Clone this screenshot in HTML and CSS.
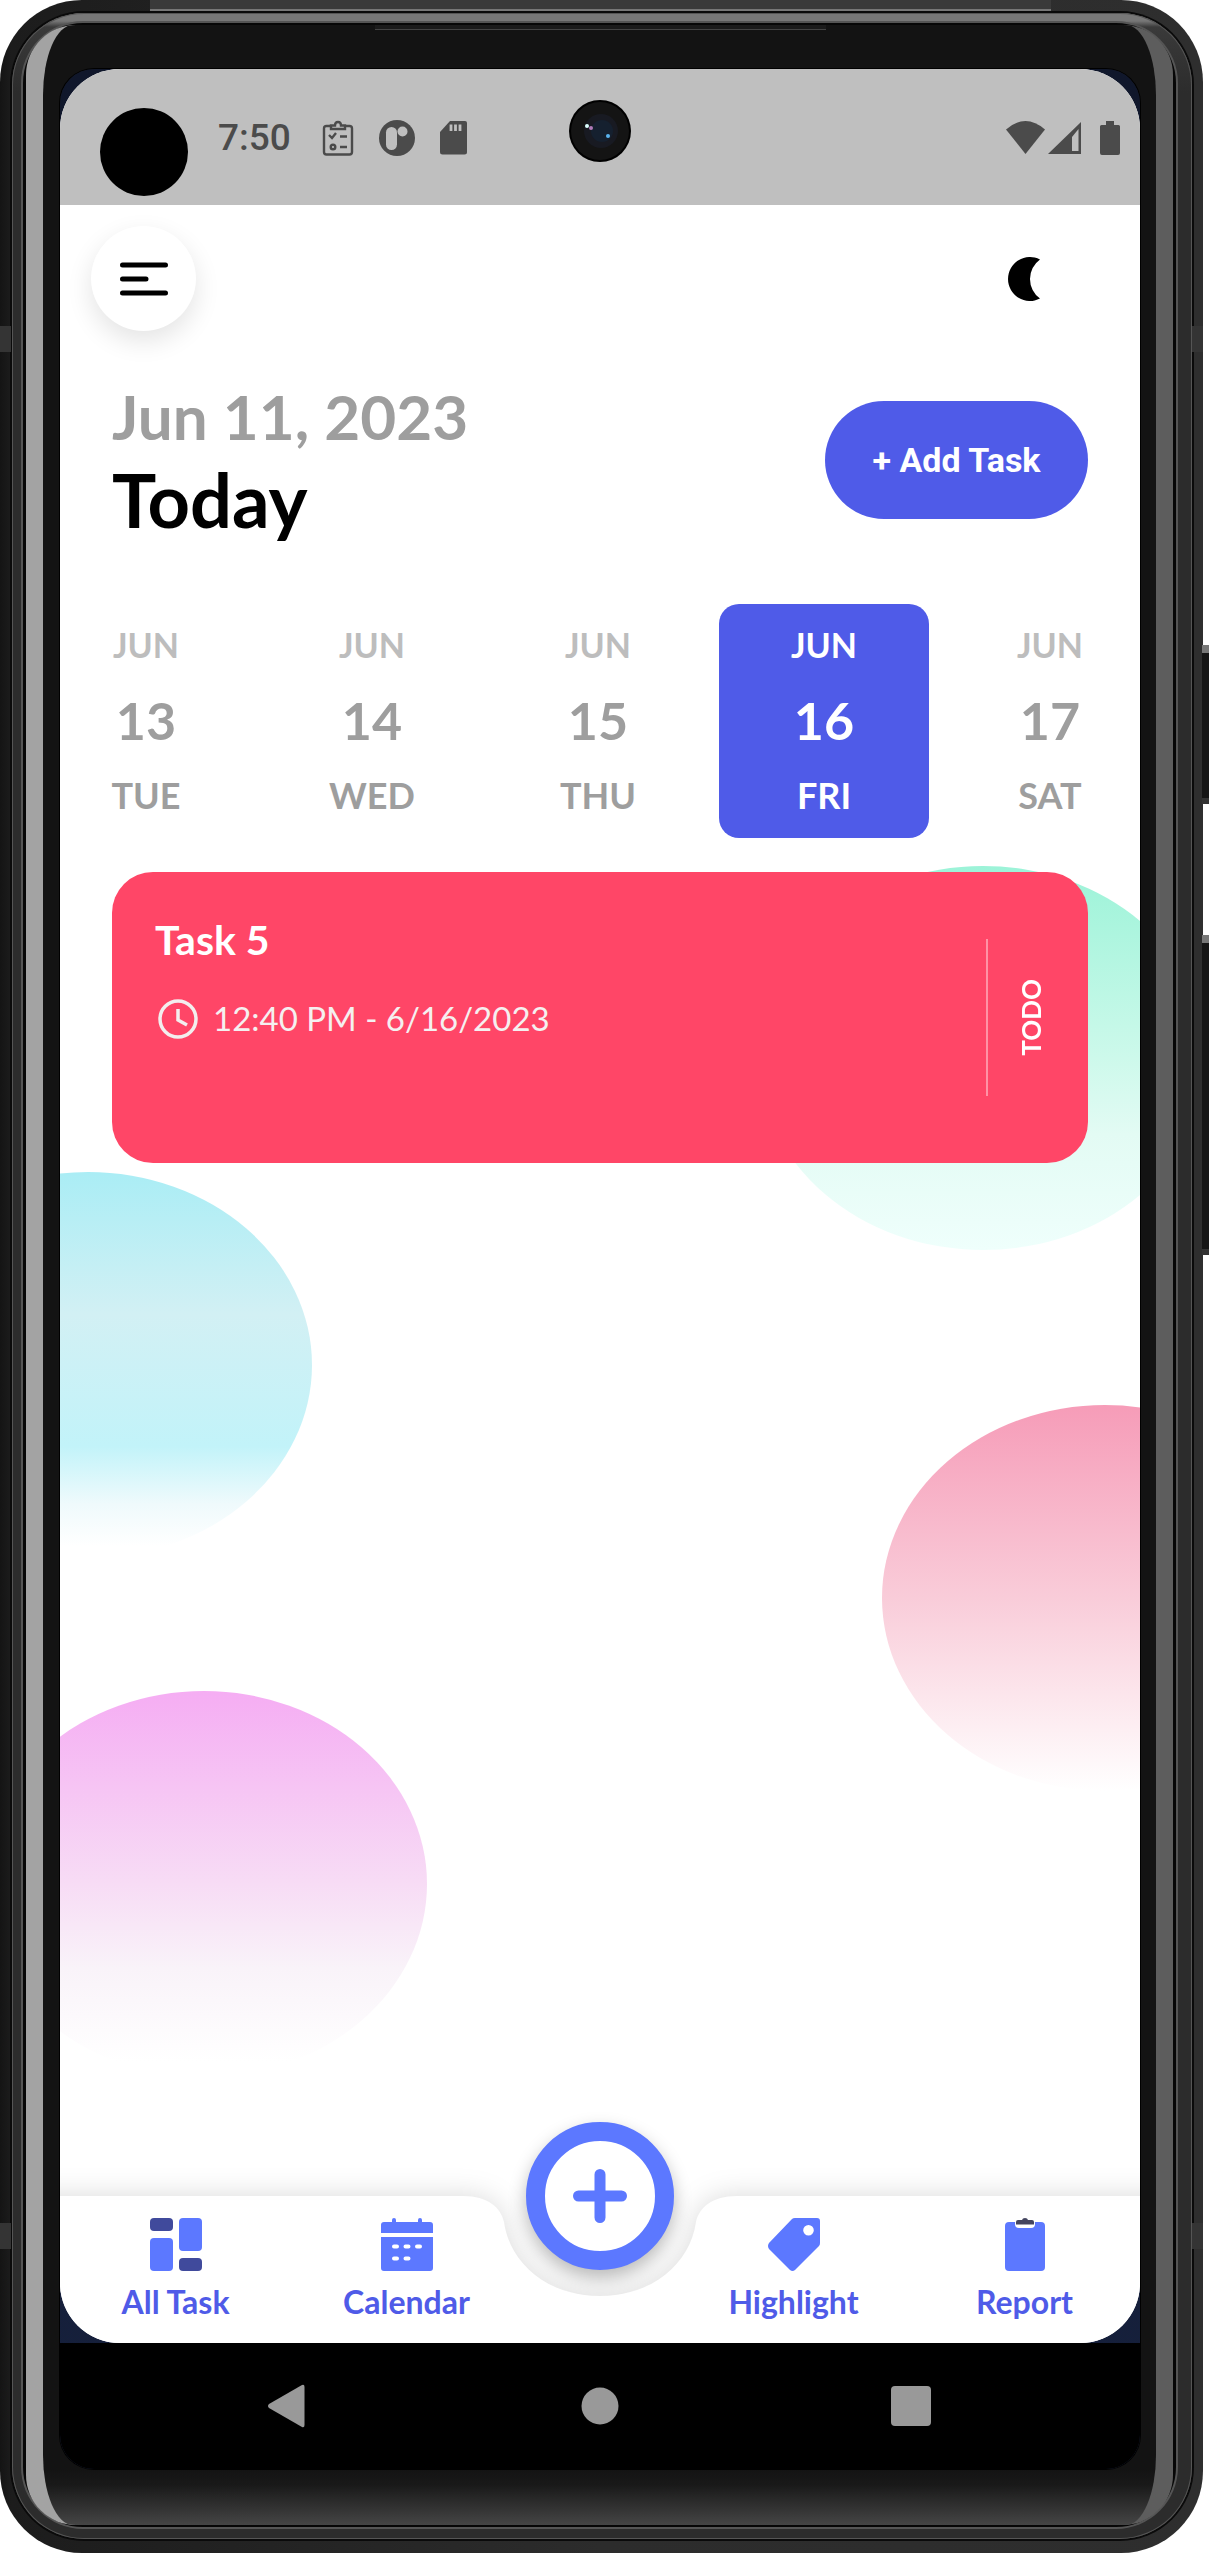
FILE: index.html
```html
<!DOCTYPE html>
<html lang="en">
<head>
<meta charset="utf-8">
<meta name="viewport" content="width=device-width, initial-scale=1">
<title>Today's tasks</title>
<link rel="stylesheet" href="styles.css">
</head>
<body>
<div class="phone">
  <span class="side-key power"></span>
  <span class="side-key volume"></span>
  <span class="band band-tl"></span><span class="band band-tr"></span>
  <span class="band band-bl"></span><span class="band band-br"></span>
  <span class="crown"></span>
  <div class="rail">
    <div class="lip">
      <div class="glass">
        <div class="bezel">
          <span class="earpiece"></span>
          <div class="screen">
            <div class="app">
              <header class="status">
                <span class="dot"></span>
                <span class="time">7:50</span>
                <svg class="note" width="32" height="36" viewBox="0 0 32 36" fill="none" stroke="#4b4b4b" stroke-width="2.4">
                  <path d="M9 6H4.500Q2 6 2 8.500V32Q2 34.500 4.500 34.500H27.500Q30 34.500 30 32V8.500Q30 6 27.500 6H23M9 9V5.500H13Q13 2 16 2T19 5.500H23V9Z"/>
                  <path d="M7 15L10 18L14 13M18 16.500H25M18 27H25"/><circle cx="11" cy="27" r="2.300"/>
                </svg>
                <svg class="note" width="36" height="38" viewBox="0 0 36 38">
                  <circle cx="18" cy="19" r="18" fill="#4b4b4b"/><rect x="7" y="8" width="11" height="23" rx="5.500" fill="#bfbfbf"/><circle cx="23.500" cy="12.500" r="5" fill="#bfbfbf"/>
                </svg>
                <svg class="note" width="28" height="34" viewBox="0 0 28 34">
                  <path d="M10 0H25Q27 0 27 2V31Q27 33.500 24.500 33.500H2.500Q0 33.500 0 31V11Z" fill="#4b4b4b"/><path d="M11 3.500V10M15.500 3.500V10M20 3.500V10" stroke="#bfbfbf" stroke-width="2.800"/>
                </svg>
                <svg class="signals" width="116" height="34" viewBox="0 0 116 34" fill="#4b4b4b">
                  <path d="M0 8.500Q19.500 -8.500 39 8.500L19.500 33Z"/>
                  <path fill-rule="evenodd" d="M75 1V33H42ZM72.500 8L66 16V30H72.500Z"/>
                  <path d="M100 0H108V4H112.500Q114 4 114 5.500V32Q114 34 112 34H96Q94 34 94 32V5.500Q94 4 95.500 4H100Z"/>
                </svg>
              </header>
              <div class="camera">
                <svg width="62" height="62" viewBox="0 0 62 62">
                  <circle cx="31" cy="31" r="31" fill="#000"/><circle cx="31" cy="31" r="29" fill="#141414"/><circle cx="32" cy="31" r="17" fill="#181a22"/><circle cx="33" cy="31" r="11" fill="#15202f"/>
                  <circle cx="18" cy="26" r="2" fill="#dff"/><circle cx="22" cy="28" r="2" fill="#b07ab8"/><circle cx="39" cy="36" r="2" fill="#5ab4f0"/>
                </svg>
              </div>

              <main class="content">
                <svg class="blobs" height="1900" aria-hidden="true">
                  <defs>
                    <linearGradient id="green" x1="0" y1="0" x2="0" y2="1"><stop offset="0" stop-color="#9cf3d8"/><stop offset=".5" stop-color="#cdf9eb"/><stop offset=".7" stop-color="#e3fbf4"/><stop offset="1" stop-color="#effffc"/></linearGradient>
                    <linearGradient id="cyan" x1="0" y1="0" x2="0" y2="1"><stop offset="0" stop-color="#aaedf5"/><stop offset=".37" stop-color="#d2f0f4"/><stop offset=".71" stop-color="#c2f3f9"/><stop offset=".86" stop-color="#effafc"/><stop offset=".97" stop-color="#fff"/></linearGradient>
                    <linearGradient id="rose" x1="0" y1="0" x2="0" y2="1"><stop offset="0" stop-color="#f69cb8"/><stop offset=".5" stop-color="#f9ccd9"/><stop offset="1" stop-color="#fff"/></linearGradient>
                    <linearGradient id="violet" x1="0" y1="0" x2="0" y2="1"><stop offset="0" stop-color="#f5adf3"/><stop offset=".5" stop-color="#f7dcf5"/><stop offset=".72" stop-color="#f9f3f9"/><stop offset=".96" stop-color="#fff"/></linearGradient>
                  </defs>
                  <ellipse cx="28" cy="1160" rx="224" ry="193" fill="url(#cyan)"/>
                  <ellipse cx="144" cy="1679" rx="223" ry="193" fill="url(#violet)"/>
                  <svg x="100%" overflow="visible"><ellipse cx="-157" cy="853" rx="224" ry="192" fill="url(#green)"/><ellipse cx="-35" cy="1393" rx="223" ry="193" fill="url(#rose)"/></svg>
                </svg>

                <div class="appbar">
                  <button class="round menu" type="button" aria-label="Menu">
                    <svg width="48" height="34" viewBox="0 0 48 34" stroke="#000" stroke-width="5" stroke-linecap="round"><path d="M2.500 3H45.500M2.500 17H26M2.500 31H45.500"/></svg>
                  </button>
                  <button class="round theme" type="button" aria-label="Dark mode">
                    <svg width="32" height="44" viewBox="0 0 32 44"><path d="M32 2.400A22 22 0 1 0 32 41.600A24.200 24.200 0 0 1 32 2.400Z"/></svg>
                  </button>
                </div>

                <div class="heading">
                  <div>
                    <p class="date">Jun 11, 2023</p>
                    <h1 class="today">Today</h1>
                  </div>
                  <button class="add" type="button">+ Add Task</button>
                </div>

                <div class="days">
                  <button class="day" type="button"><span class="month">JUN</span><span class="num">13</span><span>TUE</span></button>
                  <button class="day" type="button"><span class="month">JUN</span><span class="num">14</span><span>WED</span></button>
                  <button class="day" type="button"><span class="month">JUN</span><span class="num">15</span><span>THU</span></button>
                  <button class="day selected" type="button" aria-pressed="true"><span class="month">JUN</span><span class="num">16</span><span>FRI</span></button>
                  <button class="day" type="button"><span class="month">JUN</span><span class="num">17</span><span>SAT</span></button>
                </div>

                <article class="task">
                  <div class="task-body">
                    <h2 class="task-title">Task 5</h2>
                    <p class="task-time">
                      <svg width="46" height="44" viewBox="0 0 46 44" fill="none" stroke="#f3eeee" stroke-width="3.500"><circle cx="23" cy="23" r="18"/><path d="M23 13V24L32 29"/></svg>
                      12:40 PM - 6/16/2023
                    </p>
                  </div>
                  <span class="rule"></span>
                  <span class="state">TODO</span>
                </article>
              </main>

              <nav class="tabs">
                <svg class="tabs-shape" width="100%" height="147" aria-hidden="true"><svg x="50%" overflow="visible"><path fill="#fff" d="M-2000 0H-137C-112 0 -99 12 -96 26C-90 68 -52 100 0 100C52 100 90 68 96 26C99 12 112 0 137 0H2000V147H-2000Z"/></svg></svg>
                <a class="tab" href="#all">
                  <svg width="54" height="54" viewBox="0 0 54 54"><g fill="#404a9c"><rect x="1" width="23" height="13" rx="4"/><rect x="30" y="40" width="23" height="13" rx="4"/></g><g fill="#5c78ff"><rect x="1" y="20" width="23" height="33" rx="4"/><rect x="30" width="23" height="33" rx="4"/></g></svg>
                  All Task
                </a>
                <a class="tab" href="#calendar">
                  <svg width="54" height="54" viewBox="0 0 54 54" fill="#5c78ff"><path d="M1 15V7Q1 4 4 4H12V2Q12 0 14 0T16 2V4H38V2Q38 0 40 0T42 2V4H50Q53 4 53 7V15ZM1 19H53V50Q53 53 50 53H4Q1 53 1 50Z"/><path d="M14 28.500H17M25.500 28.500H28.500M37 28.500H40M14 40.500H17M25.500 40.500H28.500" stroke="#fff" stroke-width="4" stroke-linecap="round"/></svg>
                  Calendar
                </a>
                <span></span>
                <a class="tab" href="#highlight">
                  <svg width="54" height="54" viewBox="0 0 54 54" fill="#5c78ff"><path fill-rule="evenodd" d="M25 1Q26 0 28 0H50Q53 0 53 3V25Q53 27 52 28L28 52Q25.500 54 23 52L2 31Q0 28 2 25ZM41.500 7A5.300 5.300 0 1 0 41.500 17.600A5.300 5.300 0 1 0 41.500 7Z"/></svg>
                  Highlight
                </a>
                <a class="tab" href="#report">
                  <svg width="54" height="54" viewBox="0 0 54 54"><rect x="7" y="4" width="40" height="49" rx="4" fill="#5c78ff"/><rect x="17" y="1" width="20" height="9" rx="4" fill="#fff"/><path d="M20 2H24Q24.500 0 27 0T30 2H34Q36 2 36 4V6.500H18V4Q18 2 20 2Z" fill="#44455f"/></svg>
                  Report
                </a>
                <button class="fab" type="button" aria-label="New task">
                  <svg width="56" height="56" viewBox="0 0 56 56" stroke="#5c78ff" stroke-width="11" stroke-linecap="round"><path d="M28 6.500V49.500M6.500 28H49.500"/></svg>
                </button>
              </nav>
            </div>
            <div class="system">
              <button type="button" aria-label="Back"><svg width="44" height="44" viewBox="0 0 44 44" fill="#999"><path d="M35 1Q37.500 0 37.500 3V41Q37.500 44 35 43L2 24Q0 22 2 20Z"/></svg></button>
              <button type="button" aria-label="Home"><svg width="44" height="44" viewBox="0 0 44 44" fill="#999"><circle cx="22" cy="22" r="18.500"/></svg></button>
              <button type="button" aria-label="Recent apps"><svg width="44" height="44" viewBox="0 0 44 44" fill="#999"><rect x="2" y="2" width="40" height="40" rx="4"/></svg></button>
            </div>
          </div>
        </div>
      </div>
    </div>
  </div>
</div>
</body>
</html>
```
FILE: styles.css
```css
* { box-sizing: border-box; margin: 0; padding: 0; }
body { background: #fff; font-family: Lato, "Liberation Sans", sans-serif; }
button { border: 0; background: none; font: inherit; cursor: pointer; }
svg { display: block; flex: none; }

/* Device frame, from the outer shell inwards */
.phone {
  position: relative;
  display: flex;
  min-height: 100vh;
  margin-right: 6px;
  padding: 13px 11px 14px 12px;
  border-radius: 82px;
  background: linear-gradient(90deg, #141414, #1c1c1c 11px, #2c2c2c 50%, #2e2e2e);
}
.rail, .lip, .glass, .bezel { display: flex; flex: 1; min-width: 0; }
.rail {
  padding: 10px 16px 12px 11px;
  border-radius: 72px;
  background: linear-gradient(#777 0 8px, #3a3a3a 14px, #2c2c2c 80px);
  box-shadow: inset 0 0 0 1px #555, 0 0 0 2px #0a0a0a;
}
.lip {
  padding: 2px 3px;
  border-radius: 60px;
  background: #070707;
  box-shadow: 0 0 0 2px #555;
}
.glass {
  overflow: hidden;
  padding: 0 17px;
  border-radius: 50px;
  background: linear-gradient(90deg, #a3a3a3 50%, #5d5d5d 50%);
}
.bezel {
  position: relative;
  padding: 44px 16px 56px 17px;
  border-radius: 30px / 70px;
  background: linear-gradient(transparent calc(100% - 56px), #191919 calc(100% - 40px), #454545), #131313;
}
.earpiece { position: absolute; top: 0; left: 332px; right: 330px; height: 5px; background: #1b1b1b; border-bottom: 1px solid #444; }
.crown { position: absolute; top: 0; left: 150px; right: 152px; height: 11px; background: #3a3a3a; border-bottom: 2px solid #777; }
.band { position: absolute; width: 11px; height: 26px; background: #343434; }
.band-tl { left: 0; top: 326px; }
.band-tr { right: 0; top: 326px; }
.band-bl { left: 0; bottom: 304px; }
.band-br { right: 0; bottom: 304px; }
.side-key { position: absolute; right: -6px; width: 7px; border-top: 8px solid #777; border-bottom: 6px solid #333; background: #151515; }
.power { top: 645px; height: 159px; }
.volume { top: 935px; height: 320px; }

/* Screen */
.screen {
  display: flex;
  flex: 1;
  flex-direction: column;
  min-width: 0;
  overflow: hidden;
  border-radius: 34px;
  background: linear-gradient(#10172b, #16203c);
  box-shadow: 0 0 0 1px #000;
}
.app {
  position: relative;
  display: flex;
  flex: 1;
  flex-direction: column;
  overflow: hidden;
  border-radius: 60px;
  background: #fff;
}
.status {
  display: flex;
  align-items: center;
  padding: 39px 18px 9px 40px;
  background: #bfbfbf;
}
.dot { width: 88px; height: 88px; border-radius: 50%; background: #000; }
.time { margin: 0 31px 28px 30px; font: 500 37px/44px Roboto, sans-serif; color: #4b4b4b; }
.note { margin: 0 25px 28px 0; }
.signals { margin: 0 0 28px auto; }
.camera { position: absolute; top: 31px; left: 50%; margin-left: -31px; }

.content { position: relative; flex: 1; }
.blobs { position: absolute; top: 0; left: 0; width: 100%; overflow: visible; }
.appbar, .heading, .days, .task { position: relative; }
.appbar { display: flex; justify-content: space-between; padding: 21px 64px 45px 31px; }
.round { display: grid; place-items: center; width: 105px; height: 105px; border-radius: 50%; }
.menu { background: #fff; box-shadow: 0 10px 26px rgba(0, 0, 0, .11); }

.heading { display: flex; align-items: center; justify-content: space-between; padding: 0 52px; }
.date { font-size: 62px; font-weight: 700; line-height: 80px; color: #9e9e9e; }
.today { font-size: 74px; font-weight: 700; line-height: 88px; color: #000; }
.add { width: 263px; height: 118px; border-radius: 59px; background: #4f5be8; color: #fff; font: 700 34px/40px Roboto, sans-serif; }

.days { display: flex; justify-content: center; gap: 16px; margin-top: 60px; overflow: hidden; padding-right: 4px; }
.day {
  display: flex;
  flex: none;
  flex-direction: column;
  align-items: center;
  gap: 21px;
  width: 210px;
  padding: 19px 0 21px;
  border-radius: 20px;
  font-size: 36px;
  font-weight: 700;
  line-height: 44px;
  color: #9e9e9e;
}
.month { font-size: 34px; color: #bdbdbd; }
.num { font-size: 52px; line-height: 64px; }
.selected, .selected .month { color: #fff; }
.selected { background: #4f5be8; }

.task {
  display: flex;
  align-items: center;
  min-height: 291px;
  margin: 34px 52px 0;
  padding: 44px 39px 44px 43px;
  border-radius: 41px;
  background: #ff4667;
  color: #fff;
}
.task-body { flex: 1; align-self: flex-start; }
.task-title { font-size: 41px; font-weight: 700; line-height: 48px; }
.task-time { display: flex; gap: 12px; margin-top: 32px; font-size: 33px; line-height: 44px; color: #f5f0f0; }
.rule { width: 2px; height: 157px; background: #ff92a5; }
.state { margin-left: 25px; writing-mode: vertical-rl; transform: rotate(180deg); font-size: 26px; font-weight: 700; line-height: 36px; }

/* Bottom bar */
.tabs { position: relative; display: grid; grid-template-columns: 1fr 1fr 156px 1fr 1fr; height: 147px; }
.tabs-shape { position: absolute; inset: 0; overflow: visible; filter: drop-shadow(0 0 14px rgba(0, 0, 0, .15)); }
.tab {
  position: relative;
  display: flex;
  flex-direction: column;
  align-items: center;
  gap: 10px;
  padding-top: 22px;
  font-size: 32px;
  font-weight: 700;
  line-height: 40px;
  color: #4f5be8;
  text-decoration: none;
}
.fab {
  position: absolute;
  top: -74px;
  left: 50%;
  display: grid;
  place-items: center;
  width: 148px;
  height: 148px;
  margin-left: -74px;
  border: 19px solid #5c78ff;
  border-radius: 50%;
  background: #fff;
  box-shadow: 0 8px 18px rgba(0, 0, 0, .28);
}

.system { display: flex; align-items: center; justify-content: center; gap: 267px; height: 126px; background: #000; }
```
